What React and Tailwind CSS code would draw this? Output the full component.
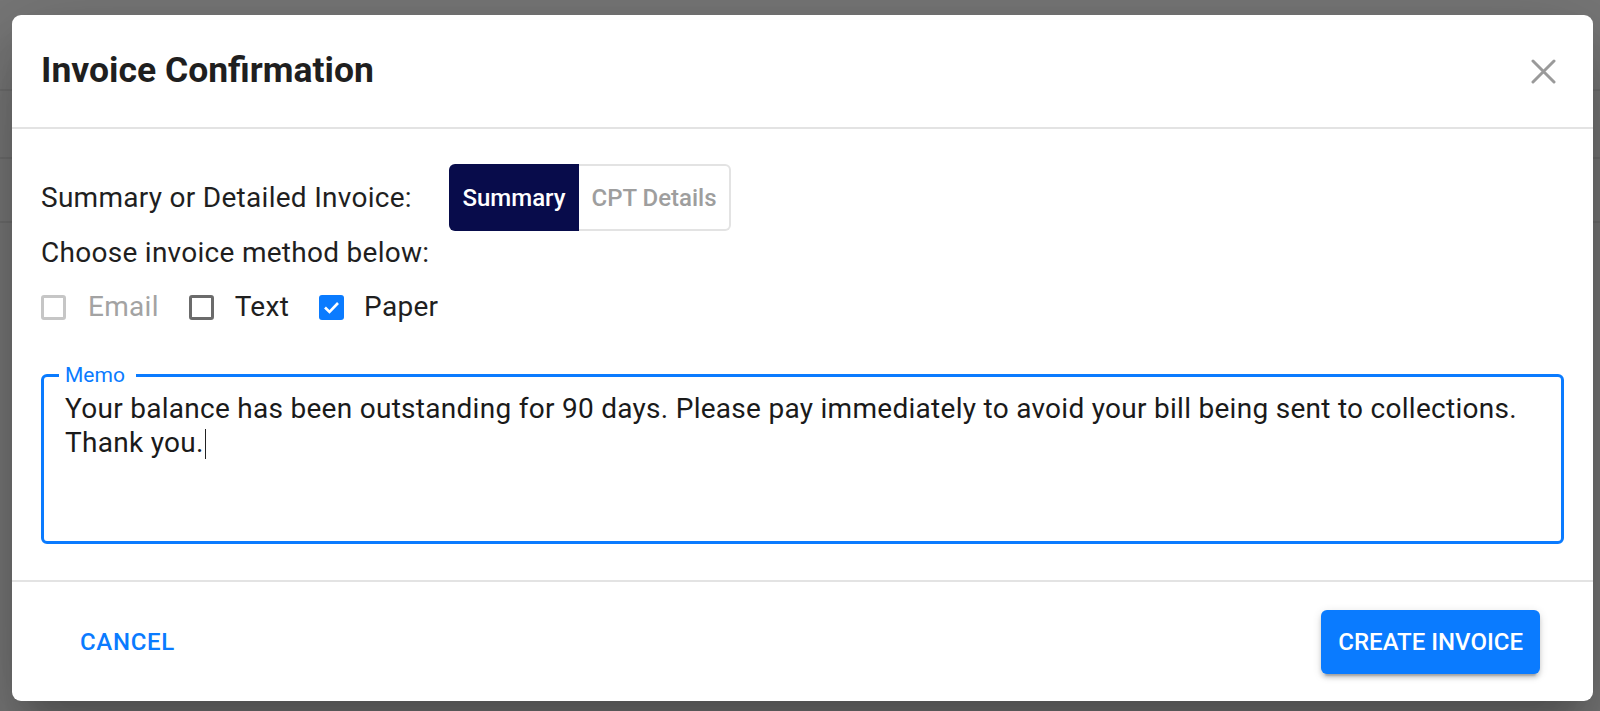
export default function App() {
  return (
    <div className="relative h-[711px] w-full overflow-hidden bg-[#777777] font-['Roboto',sans-serif]">
      <div className="h-[91px] border-b-2 border-[#6e6e6e]" />
      <div className="h-[68px] border-b-2 border-[#6e6e6e]" />
      <div className="h-[64px] border-b-2 border-[#6e6e6e]" />

      <div
        role="dialog"
        className="absolute left-[12px] top-[15px] flex h-[686px] w-[1581px] flex-col rounded-[9px] bg-white shadow-[0_22px_30px_-14px_rgba(0,0,0,0.2),0_48px_76px_6px_rgba(0,0,0,0.14),0_18px_92px_16px_rgba(0,0,0,0.12)]"
      >
        {/* Header */}
        <div className="flex h-[114px] shrink-0 items-center justify-between border-b-2 border-[#e3e3e3] pl-[29px] pr-[37px]">
          <h2 className="text-[35.5px] font-bold leading-none text-[#1f1f1f]">Invoice Confirmation</h2>
          <svg width="25" height="25" viewBox="0 0 25 25" fill="none" stroke="#9a9a9a" strokeWidth="3" strokeLinecap="round">
            <path d="M2 2 L23 23 M23 2 L2 23" />
          </svg>
        </div>

        {/* Content */}
        <div className="flex flex-1 flex-col px-[29px] pt-[35px] text-[#1f1f1f]">
          <div className="flex items-center">
            <span className="w-[408px] text-[28px] leading-[32px] tracking-[0.01em]">Summary or Detailed Invoice:</span>
            <div className="flex h-[67px]">
              <div className="flex w-[130px] items-center justify-center rounded-l-[6px] bg-[#080c4b] text-[24px] font-medium text-white">
                Summary
              </div>
              <div className="flex w-[152px] items-center justify-center rounded-r-[6px] border-2 border-l-0 border-[#e3e3e3] text-[24px] font-medium text-[#9e9e9e]">
                CPT Details
              </div>
            </div>
          </div>

          <div className="mt-[6px] text-[28px] leading-[32px] tracking-[0.01em]">Choose invoice method below:</div>

          <div className="mt-[22px] flex h-[32px] items-center gap-[30px] text-[28px] leading-[32px] tracking-[0.01em]">
            <label className="flex items-center gap-[22px]">
              <span className="h-[25px] w-[25px] rounded-[3px] border-[3px] border-[#c6c6c6]" />
              <span className="text-[#a3a3a3]">Email</span>
            </label>
            <label className="flex items-center gap-[21px]">
              <span className="h-[25px] w-[25px] rounded-[3px] border-[3px] border-[#6b6b6b]" />
              <span>Text</span>
            </label>
            <label className="flex items-center gap-[20px]">
              <span className="flex h-[25px] w-[25px] items-center justify-center rounded-[3px] bg-[#0a7bff]">
                <svg width="19" height="19" viewBox="0 0 19 19" fill="none" stroke="white" strokeWidth="2.6">
                  <path d="M3 9.5 L7.5 14 L16 5" />
                </svg>
              </span>
              <span>Paper</span>
            </label>
          </div>

          <div className="relative mt-[51px] h-[170px] rounded-[6px] border-[3px] border-[#0a7bff] px-[21px] pt-[15px]">
            <span className="absolute -top-[12px] left-[15px] bg-white pl-[6px] pr-[11px] text-[21px] leading-[20px] text-[#0a7bff]">
              Memo
            </span>
            <p className="whitespace-nowrap text-[28px] leading-[34px] tracking-[0.01em] text-[#1a1a1a]">
              Your balance has been outstanding for 90 days. Please pay immediately to avoid your bill being sent to collections.
              <br />
              Thank you.<span className="ml-[1px] inline-block h-[30px] w-[1.5px] bg-[#222] align-[-7px]" />
            </p>
          </div>
        </div>

        {/* Footer */}
        <div className="flex h-[121px] shrink-0 items-center justify-between border-t-2 border-[#e3e3e3] px-[51px]">
          <button className="flex h-[64px] items-center px-[17px] text-[24px] font-medium uppercase tracking-[0.02857em] text-[#0a7bff]">
            Cancel
          </button>
          <button className="mr-[2px] flex h-[64px] items-center rounded-[6px] bg-[#0a7bff] px-[17px] text-[24px] font-medium uppercase tracking-normal text-white shadow-[0_6px_2px_-4px_rgba(0,0,0,0.2),0_4px_4px_0_rgba(0,0,0,0.14),0_2px_10px_0_rgba(0,0,0,0.12)]">
            Create Invoice
          </button>
        </div>
      </div>
    </div>
  );
}
